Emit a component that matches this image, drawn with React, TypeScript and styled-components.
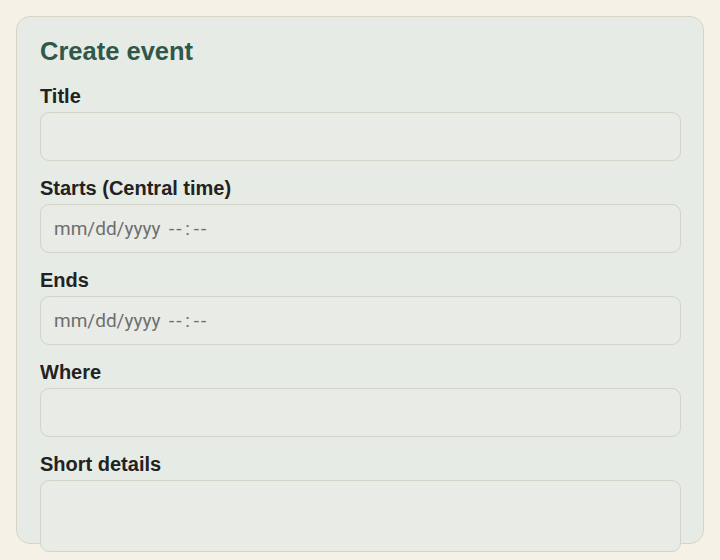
import React, { useState } from "react";
import styled, { createGlobalStyle } from "styled-components";

const GlobalStyle = createGlobalStyle`
  html, body {
    margin: 0;
    padding: 0;
    background: #f5f1e7;
    font-family: "Liberation Sans", Arial, sans-serif;
  }
  * { box-sizing: border-box; }
`;

const Page = styled.div`
  padding: 16px;
  height: 560px;
  overflow: hidden;
`;

const Card = styled.form`
  background: #e7ebe6;
  border: 1px solid #d6d5c8;
  border-radius: 14px;
  height: 528px;
  padding: 19px 23px 0;
`;

const Heading = styled.h2`
  margin: 0 0 19px;
  font-size: 25.5px;
  line-height: 30px;
  font-weight: 700;
  color: #30584a;
`;

const Field = styled.div`
  margin-bottom: 16px;
`;

const Label = styled.label`
  display: block;
  font-size: 20px;
  line-height: 22px;
  font-weight: 700;
  color: #222;
  margin-bottom: 5px;
`;

const TextInput = styled.input`
  display: block;
  width: 641px;
  height: 49px;
  padding: 0 13px;
  border: 1px solid #d3d3c7;
  border-radius: 9px;
  background: #e8ebe6;
  font-family: Roboto, "Liberation Sans", sans-serif;
  font-size: 19px;
  color: #333;
  outline: none;

  &::placeholder {
    color: #6e6e6e;
    opacity: 1;
  }
`;

const TextArea = styled.textarea`
  display: block;
  width: 641px;
  height: 72px;
  padding: 12px 13px;
  border: 1px solid #d3d3c7;
  border-radius: 9px;
  background: #e8ebe6;
  font-family: Roboto, "Liberation Sans", sans-serif;
  font-size: 18px;
  resize: none;
  outline: none;
`;

const DATE_HINT = "mm/dd/yyyy\u00a0\u2009-\u200a-\u2009:\u2009-\u200a-";

export default function App() {
  const [title, setTitle] = useState("");
  const [starts, setStarts] = useState("");
  const [ends, setEnds] = useState("");
  const [where, setWhere] = useState("");
  const [details, setDetails] = useState("");
  return (
    <>
      <GlobalStyle />
      <Page>
        <Card onSubmit={(e) => e.preventDefault()}>
          <Heading>Create event</Heading>
          <Field>
            <Label htmlFor="title">Title</Label>
            <TextInput id="title" value={title} onChange={(e) => setTitle(e.target.value)} />
          </Field>
          <Field>
            <Label htmlFor="starts">Starts (Central time)</Label>
            <TextInput
              id="starts"
              placeholder={DATE_HINT}
              value={starts}
              onChange={(e) => setStarts(e.target.value)}
            />
          </Field>
          <Field>
            <Label htmlFor="ends">Ends</Label>
            <TextInput
              id="ends"
              placeholder={DATE_HINT}
              value={ends}
              onChange={(e) => setEnds(e.target.value)}
            />
          </Field>
          <Field>
            <Label htmlFor="where">Where</Label>
            <TextInput id="where" value={where} onChange={(e) => setWhere(e.target.value)} />
          </Field>
          <Field>
            <Label htmlFor="details">Short details</Label>
            <TextArea id="details" value={details} onChange={(e) => setDetails(e.target.value)} />
          </Field>
        </Card>
      </Page>
    </>
  );
}
